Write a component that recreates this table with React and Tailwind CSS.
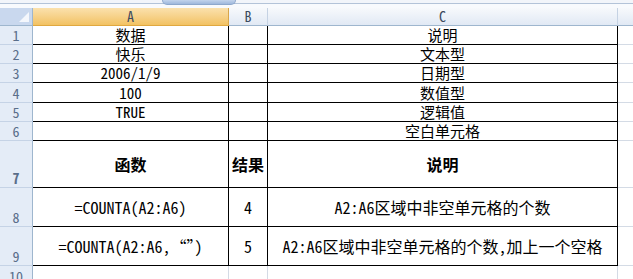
import React from "react";

const font = "font-['Noto_Sans_Mono_CJK_SC','Noto_Sans_CJK_SC',monospace]";

const rows = [
  { n: 1, h: "h-[19px]", a: "数据", b: "", c: "说明" },
  { n: 2, h: "h-[19px]", a: "快乐", b: "", c: "文本型" },
  { n: 3, h: "h-[19px]", a: "2006/1/9", b: "", c: "日期型" },
  { n: 4, h: "h-[20px]", a: "100", b: "", c: "数值型" },
  { n: 5, h: "h-[19px]", a: "TRUE", b: "", c: "逻辑值" },
  { n: 6, h: "h-[19px]", a: "", b: "", c: "空白单元格" },
];

const big = [
  { n: 7, h: "h-[47px]", a: "函数", b: "结果", c: "说明", bold: true },
  { n: 8, h: "h-[39px]", a: "=COUNTA(A2:A6)", b: "4", c: "A2:A6区域中非空单元格的个数" },
  { n: 9, h: "h-[39px]", a: "=COUNTA(A2:A6,“”)", b: "5", c: "A2:A6区域中非空单元格的个数,加上一个空格" },
];

const RowHead = ({ n }) => (
  <div className="w-[33px] shrink-0 bg-[#e4ecf7] border-r border-b border-r-[#9eb6ce] border-b-[#c5d3e6] flex items-end justify-center text-[14px] leading-[16px] text-[#5a6e8a] pb-[1px]">
    {n}
  </div>
);

const App = () => {
  return (
    <div className={`w-[633px] h-[279px] overflow-hidden bg-white relative ${font} text-black`}>
      {/* top strip */}
      <div className="h-[3px] bg-[#f2f5fa]" />
      <div className="h-[5px] bg-[#f8fafd] border-t border-[#b3c3d8]" />
      <div className="absolute left-[162px] top-0 w-[74px] h-[5px] rounded-b-[6px] bg-gradient-to-b from-[#c3d4ec] to-[#9fb8dc] border border-t-0 border-[#8ea8cc]" />

      {/* column header */}
      <div className="flex h-[18px] text-[14px] leading-[17px] text-[#3c4a5e]">
        <div className="w-[33px] shrink-0 bg-[#c9d8ee] border-r border-b border-[#9eb6ce] relative">
          <div className="absolute right-[3px] bottom-[3px] w-0 h-0 border-l-[10px] border-l-transparent border-b-[10px] border-b-[#f4f7fc]" />
        </div>
        <div className="w-[196px] shrink-0 bg-gradient-to-b from-[#fbe1ad] to-[#f2c262] border-r border-b border-r-[#d8a64a] border-b-[#e0a840] text-center">A</div>
        <div className="w-[39px] shrink-0 bg-gradient-to-b from-[#f7f9fc] to-[#e1e9f4] border-r border-b border-r-[#c5d2e3] border-b-[#9eb6ce] text-center">B</div>
        <div className="w-[350px] shrink-0 bg-gradient-to-b from-[#f7f9fc] to-[#e1e9f4] border-r border-b border-r-[#c5d2e3] border-b-[#9eb6ce] text-center">C</div>
        <div className="flex-1 bg-gradient-to-b from-[#f7f9fc] to-[#e1e9f4] border-b border-[#9eb6ce]" />
      </div>

      {rows.map((r) => (
        <div key={r.n} className={`flex ${r.h} text-[15px] leading-[18px]`}>
          <RowHead n={r.n} />
          <div className="w-[196px] shrink-0 border-r border-b border-black flex items-end justify-center">{r.a}</div>
          <div className="w-[39px] shrink-0 border-r border-b border-black flex items-end justify-center">{r.b}</div>
          <div className="w-[350px] shrink-0 border-r border-b border-black flex items-end justify-center">{r.c}</div>
          <div className="flex-1 border-b border-[#d4dbe5]" />
        </div>
      ))}

      {big.map((r) => (
        <div key={r.n} className={`flex ${r.h} text-[16px] leading-[18px] ${r.bold ? "font-bold" : ""}`}>
          <RowHead n={r.n} />
          <div className="w-[196px] shrink-0 border-r border-b border-black flex items-center justify-center whitespace-nowrap">{r.a}</div>
          <div className="w-[39px] shrink-0 border-r border-b border-black flex items-center justify-center whitespace-nowrap">{r.b}</div>
          <div className="w-[350px] shrink-0 border-r border-b border-black flex items-center justify-center whitespace-nowrap">{r.c}</div>
          <div className="flex-1 border-b border-[#d4dbe5]" />
        </div>
      ))}

      <div className="flex h-[20px]">
        <RowHead n={10} />
        <div className="w-[196px] shrink-0 border-r border-[#d4dbe5]" />
        <div className="w-[39px] shrink-0 border-r border-[#d4dbe5]" />
        <div className="w-[350px] shrink-0 border-r border-[#d4dbe5]" />
      </div>
    </div>
  );
};

export default App;
